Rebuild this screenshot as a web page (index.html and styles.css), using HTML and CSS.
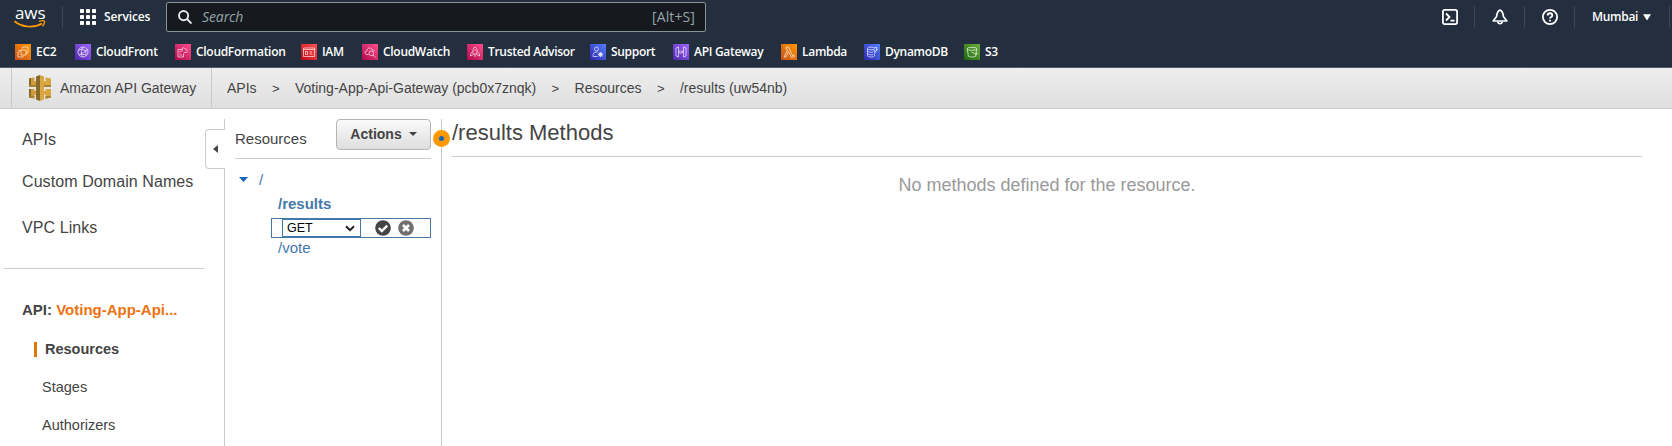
FILE: index.html
```html
<!DOCTYPE html>
<html lang="en">
<head>
<meta charset="utf-8">
<title>API Gateway</title>
<link rel="stylesheet" href="styles.css">
</head>
<body>
<svg width="0" height="0" class="defs">
  <defs>
    <linearGradient id="orange" x1="0" y1="1" x2="1" y2="0"><stop offset="0" stop-color="#c8511b"/><stop offset="1" stop-color="#f90"/></linearGradient>
    <linearGradient id="purple" x1="0" y1="1" x2="1" y2="0"><stop offset="0" stop-color="#4d27a8"/><stop offset="1" stop-color="#a166ff"/></linearGradient>
    <linearGradient id="pink" x1="0" y1="1" x2="1" y2="0"><stop offset="0" stop-color="#b0084d"/><stop offset="1" stop-color="#ff4f8b"/></linearGradient>
    <linearGradient id="red" x1="0" y1="1" x2="1" y2="0"><stop offset="0" stop-color="#bd0816"/><stop offset="1" stop-color="#ff5252"/></linearGradient>
    <linearGradient id="blue" x1="0" y1="1" x2="1" y2="0"><stop offset="0" stop-color="#2e27ad"/><stop offset="1" stop-color="#527fff"/></linearGradient>
    <linearGradient id="green" x1="0" y1="1" x2="1" y2="0"><stop offset="0" stop-color="#1b660f"/><stop offset="1" stop-color="#6cae3e"/></linearGradient>
  </defs>
</svg>

<header class="topnav">
  <div class="bar">
    <div class="logo"><span class="logo-text">aws</span>
      <svg class="swoosh" width="32" height="9" viewBox="0 0 32 9"><path d="M.5 1.200C8 7.500 20 8.300 28 3.500" fill="none" stroke="#f90" stroke-width="1.700"/><path d="M25 1.300C28 .6 30 .7 30.500 1.200S30 4.500 28.500 6.200" fill="none" stroke="#f90" stroke-width="1.300"/></svg>
    </div>
    <div class="services">
      <svg width="16" height="16" viewBox="0 0 16 16" fill="#fff"><rect width="4" height="4" rx=".8"/><rect x="6" width="4" height="4" rx=".8"/><rect x="12" width="4" height="4" rx=".8"/><rect y="6" width="4" height="4" rx=".8"/><rect x="6" y="6" width="4" height="4" rx=".8"/><rect x="12" y="6" width="4" height="4" rx=".8"/><rect y="12" width="4" height="4" rx=".8"/><rect x="6" y="12" width="4" height="4" rx=".8"/><rect x="12" y="12" width="4" height="4" rx=".8"/></svg>
      <span>Services</span>
    </div>
    <div class="search">
      <svg width="14" height="14" viewBox="0 0 14 14" fill="none" stroke="#e6e8e8" stroke-width="1.900"><circle cx="5.600" cy="5.600" r="4.600"/><path d="M9 9l4.500 4.500"/></svg>
      <span class="placeholder">Search</span>
      <span class="shortcut">[Alt+S]</span>
    </div>
    <div class="tools">
      <div class="tool"><svg width="16" height="16" viewBox="0 0 16 16" fill="none" stroke="#fff" stroke-width="1.800"><rect x=".9" y=".9" width="14.200" height="14.200" rx="1.800"/><path d="M4 4.500L7.500 8 4 11.500M8.500 11.600h4"/></svg></div>
      <div class="tool"><svg width="16" height="16" viewBox="0 0 16 16" fill="none" stroke="#fff" stroke-width="1.700" stroke-linejoin="round"><path d="M8 1.200C5.500 1.800 5 4 4.600 7.500L1.200 12h13.600L11.400 7.500C11 4 10.500 1.800 8 1.200z"/><path d="M5.800 12.500c.2 3 4.200 3 4.400 0"/></svg></div>
      <div class="tool"><svg width="16" height="16" viewBox="0 0 16 16" fill="none" stroke="#fff" stroke-width="1.800"><circle cx="8" cy="8" r="7.100"/><path d="M5.700 6.500c0-3 4.600-3 4.600 0C10.300 8 8 7.900 8 9.500M8 10.800v1.800"/></svg></div>
      <div class="region"><span>Mumbai</span><svg width="8" height="7" viewBox="0 0 8 7"><path d="M0 .3h8L4 6.500z" fill="#fff"/></svg></div>
    </div>
  </div>
  <nav class="favorites">
    <a class="fav w-ec2"><svg viewBox="0 0 16 16"><rect width="16" height="16" fill="url(#orange)"/><path d="M6 6h5v5H6zM4.500 8H3v5h5v-1.500M7.500 4.500V3H13v5.500h-1.500M3.500 6.500H6M11 9.500h1"/></svg><span>EC2</span></a>
    <a class="fav w-front"><svg viewBox="0 0 16 16"><rect width="16" height="16" fill="url(#purple)"/><circle cx="8" cy="8" r="5"/><path d="M3.500 6.500L7 5l4 2 1.500-2M7 5l-1 5 5 1V7L6 10l-2 1M6 10l2 3M7 5l1-2"/></svg><span>CloudFront</span></a>
    <a class="fav w-form"><svg viewBox="0 0 16 16"><rect width="16" height="16" fill="url(#pink)"/><path d="M7 5.500H3v7.500h5.500V9.500M4.500 7.500h2M4.500 9.200h1M4.500 11h2.500M7.500 7C6 4 9 2.500 10 5c2-.5 3 2.500 1.500 3.500H9"/></svg><span>CloudFormation</span></a>
    <a class="fav w-iam"><svg viewBox="0 0 16 16"><rect width="16" height="16" fill="url(#red)"/><path d="M2.500 4h11v8.500h-11zM2.500 5.500h11M4.500 7.500h2v3h-2zM8.500 8H11M8.500 10h3"/></svg><span>IAM</span></a>
    <a class="fav w-watch"><svg viewBox="0 0 16 16"><rect width="16" height="16" fill="url(#pink)"/><path d="M6.500 10.500H4.500C2 9.500 3 6.500 5 6.800c0-3.500 4.500-3.500 5-1 1.500-.3 2 .5 2.200 1.500"/><circle cx="9.300" cy="9.300" r="2.300"/><path d="M11 11l2.500 2.500"/></svg><span>CloudWatch</span></a>
    <a class="fav w-trust"><svg viewBox="0 0 16 16"><rect width="16" height="16" fill="url(#pink)"/><path d="M8 3C5.500 4.500 5.500 8 6.500 10h3C10.500 8 10.500 4.500 8 3zM5.800 7.500L3.500 10v2l3-1.500M10.200 7.500l2.300 2.500v2l-3-1.500M8 10v3M8 5.500v1.500"/></svg><span>Trusted Advisor</span></a>
    <a class="fav w-supp"><svg viewBox="0 0 16 16"><rect width="16" height="16" fill="url(#blue)"/><circle cx="6.500" cy="5" r="2"/><path d="M7.500 12.500H3c0-3 1-4.500 3.500-4.500h1"/><circle cx="10.500" cy="10.500" r="1.700"/><path d="M10.500 8v5M8 10.500h5M8.700 8.700l3.600 3.600M12.300 8.700l-3.600 3.600"/></svg><span>Support</span></a>
    <a class="fav w-api"><svg viewBox="0 0 16 16"><rect width="16" height="16" fill="url(#purple)"/><path d="M5.500 3L3 4v8l2.500 1zM10.500 3L13 4v8l-2.500 1zM7 6.500L6.500 8 7 9.500M8.800 6.500L7.800 9.800M9.300 7l.5 1-.5 1"/></svg><span>API Gateway</span></a>
    <a class="fav w-lamb"><svg viewBox="0 0 16 16"><rect width="16" height="16" fill="url(#orange)"/><path d="M5 3h2.500l4 8.500 1.500-.5.500 1.500-3 1L7.500 7.500 5 13H3l3.500-7L6 5H5z"/></svg><span>Lambda</span></a>
    <a class="fav w-dyn"><svg viewBox="0 0 16 16"><rect width="16" height="16" fill="url(#blue)"/><ellipse cx="7" cy="4.500" rx="3.500" ry="1.400"/><path d="M3.500 4.500v7.300c1 1.700 6 1.700 7 0V9.500M3.500 7c1 1.500 4 1.600 5.500 1M3.500 9.500c1 1.500 4 1.600 5.500 1M10.500 3.500h2.500l-1 2h1.500L10.500 9l.5-2.500H9.500"/></svg><span>DynamoDB</span></a>
    <a class="fav w-s3"><svg viewBox="0 0 16 16"><rect width="16" height="16" fill="url(#green)"/><ellipse cx="8" cy="4.800" rx="4.800" ry="1.500"/><path d="M3.200 4.800l1.200 7.500c1.500 1 5.700 1 7.200 0l1.200-7.500M7.500 8l5 2.500c1 0 1-.8-.2-1.800"/></svg><span>S3</span></a>
  </nav>
</header>

<div class="crumbs">
  <div class="product">
    <svg width="22" height="26" viewBox="0 0 22 26">
      <path d="M0 3.500L5.500 2.200v4h2V10h-2v2H0zM0 14h5.500v2h2v3.800h-2v4L0 22.500z" fill="#cf9b3a"/>
      <path d="M22 3.500L16.500 2.200v4h-2V10h2v2H22zM22 14h-5.500v2h-2v3.800h2v4l5.500-1.300z" fill="#d9a741"/>
      <path d="M0 3.500L2 3v9H0zM0 14h2v9L0 22.500zM11 0L7 1.500v23L11 26z" fill="#876929"/>
      <path d="M0 10h7v2H0zM0 20.500l5.500.5v1.500L2 23zM15 10h7v2h-7zM16.500 21H22v1.500L16.500 23.800z" fill="#a9812f"/>
      <path d="M11 0l4 1.500v23L11 26z" fill="#d9a741"/>
    </svg>
    <span>Amazon API Gateway</span>
  </div>
  <div class="trail">
    <span>APIs</span><i>&gt;</i><span>Voting-App-Api-Gateway (pcb0x7znqk)</span><i>&gt;</i><span>Resources</span><i>&gt;</i><span>/results (uw54nb)</span>
  </div>
</div>

<div class="layout">
  <aside class="sidebar">
    <a class="link l-apis">APIs</a>
    <a class="link l-domains">Custom Domain Names</a>
    <a class="link l-vpc">VPC Links</a>
    <hr>
    <div class="api-name">API: <b>Voting-App-Api...</b></div>
    <a class="sub current">Resources</a>
    <a class="sub">Stages</a>
    <a class="sub">Authorizers</a>
  </aside>
  <div class="edge">
    <div class="edge-line top"></div>
    <div class="collapse"><svg width="5" height="8" viewBox="0 0 5 8"><path d="M5 0v8L0 4z" fill="#444"/></svg></div>
    <div class="edge-line rest"></div>
  </div>
  <section class="resources">
    <div class="res-head">
      <span>Resources</span>
      <button class="actions">Actions<svg width="8" height="4" viewBox="0 0 8 4"><path d="M0 0h8L4 4z" fill="#444"/></svg></button>
    </div>
    <div class="tree">
      <div class="root"><svg width="9" height="5" viewBox="0 0 9 5"><path d="M0 0h9L4.500 5z" fill="#1166bb"/></svg><span>/</span></div>
      <div class="node selected">/results</div>
      <div class="method">
        <div class="select"><span>GET</span><svg width="10" height="7" viewBox="0 0 10 7"><path d="M1 1.200l4 4 4-4" fill="none" stroke="#222" stroke-width="2"/></svg></div>
        <svg class="ok" width="16" height="16" viewBox="0 0 16 16"><circle cx="8" cy="8" r="7.800" fill="#444"/><path d="M3.800 8l3 3 5.400-5.400" fill="none" stroke="#fff" stroke-width="2.400"/></svg>
        <svg width="16" height="16" viewBox="0 0 16 16"><circle cx="8" cy="8" r="7.800" fill="#6f6f6f"/><path d="M5 5l6 6M11 5l-6 6" stroke="#fff" stroke-width="2.600"/></svg>
      </div>
      <div class="node">/vote</div>
    </div>
  </section>
  <div class="divider"><span class="handle"></span></div>
  <main class="main">
    <h1>/results Methods</h1>
    <p>No methods defined for the resource.</p>
  </main>
</div>
</body>
</html>
```
FILE: styles.css
```css
* { box-sizing: border-box; }
body {
  margin: 0;
  height: 446px;
  overflow: hidden;
  background: #fff;
  color: #444;
  font-family: "Liberation Sans", Arial, sans-serif;
}
svg { display: block; flex: none; }
.defs { position: absolute; }

.topnav {
  height: 68px;
  background: #232f3e;
  border-bottom: 1px solid #545b64;
  color: #fff;
  font: 600 12px/16px "Open Sans", sans-serif;
  letter-spacing: -.1px;
}
.bar { display: flex; height: 34px; }
.logo {
  width: 63px;
  height: 22px;
  margin-top: 6px;
  padding-left: 14px;
  border-right: 1px solid #414750;
}
.logo-text {
  display: block;
  height: 14px;
  padding-left: 1px;
  font: 500 17px/13px "Open Sans", sans-serif;
  letter-spacing: -.1px;
}
.services {
  display: flex;
  align-items: center;
  gap: 8px;
  width: 103px;
  padding-left: 17px;
}
.search {
  display: flex;
  align-items: center;
  width: 540px;
  height: 30px;
  margin-top: 2px;
  padding: 0 10px 0 11px;
  background: #16191f;
  border: 1px solid #879596;
  border-radius: 2px;
  color: #95a5a6;
  font-size: 14px;
  font-weight: 400;
}
.placeholder { flex: 1; padding-left: 10px; font-style: italic; }
.shortcut { letter-spacing: .1px; }
.tools { display: flex; margin-left: auto; padding-top: 6px; }
.tool {
  display: flex;
  align-items: center;
  justify-content: center;
  width: 50px;
  height: 22px;
  border-right: 1px solid #414750;
}
.region {
  display: flex;
  align-items: center;
  justify-content: space-between;
  width: 95px;
  height: 22px;
  padding: 0 18px 0 17px;
  border-right: 1px solid #414750;
  margin-right: 2px;
  letter-spacing: -.3px;
}
.favorites { display: flex; gap: 18px; padding: 10px 0 0 15px; }
.fav { display: flex; gap: 5px; white-space: nowrap; letter-spacing: -.3px; }
.fav svg { width: 16px; height: 16px; fill: none; stroke: #fff; stroke-width: .75; stroke-opacity: .85; }
.fav rect { stroke: none; }
.w-ec2 { width: 42px; }
.w-front { width: 82px; }
.w-form { width: 108px; }
.w-iam { width: 43px; }
.w-watch { width: 87px; }
.w-trust { width: 105px; }
.w-supp { width: 65px; }
.w-api { width: 90px; }
.w-lamb { width: 65px; }
.w-dyn { width: 82px; }

.crumbs {
  display: flex;
  height: 41px;
  padding-left: 11px;
  background: linear-gradient(#eee, #dfdfdf);
  border-bottom: 1px solid #ccc;
  font-size: 14px;
}
.product {
  display: flex;
  align-items: center;
  gap: 9px;
  width: 201px;
  padding-left: 17px;
  border: solid #c8c8c8;
  border-width: 0 1px;
  white-space: nowrap;
}
.trail { display: flex; align-items: center; padding-left: 15px; white-space: nowrap; }
.trail i { width: 38.400px; text-align: center; font-style: normal; font-size: 13px; }

.layout { display: flex; height: 337px; }
.sidebar { display: flex; flex-direction: column; width: 205px; padding: 21px 1px 0 4px; }
.link { padding-left: 18px; font-size: 16px; line-height: 20px; letter-spacing: .08px; }
.l-domains { margin-top: 22px; }
.l-vpc { margin-top: 26px; }
.sidebar hr { flex: none; width: 100%; height: 1px; margin: 30px 0 31px; border: 0; background: #ccc; }
.api-name { padding-left: 18px; font-size: 15px; font-weight: 700; line-height: 20px; white-space: nowrap; }
.api-name b { color: #ec7211; }
.sub { margin-top: 18px; padding-left: 38px; font-size: 14.500px; line-height: 20px; }
.sub.current {
  align-self: flex-start;
  height: 15px;
  margin: 22px 0 2px 30px;
  padding-left: 8px;
  border-left: 3px solid #e07700;
  font-weight: 700;
  line-height: 15px;
}
.edge { display: flex; flex-direction: column; width: 20px; padding-top: 10px; }
.edge-line { border-right: 1px solid #ccc; }
.edge-line.top { height: 10px; }
.edge-line.rest { flex: 1; }
.collapse {
  display: flex;
  align-items: center;
  height: 40px;
  padding-left: 7px;
  border: 1px solid #ccc;
  border-right: 0;
  border-radius: 4px 0 0 4px;
}

.resources { width: 216px; padding: 10px 10px 0; font-size: 15px; }
.res-head {
  display: flex;
  align-items: center;
  justify-content: space-between;
  height: 40px;
  padding-bottom: 1px;
  border-bottom: 1px solid #ccc;
}
.res-head > span { padding-top: 1px; }
.actions {
  display: flex;
  align-items: center;
  justify-content: center;
  gap: 7px;
  align-self: flex-start;
  width: 95px;
  height: 31px;
  padding: 0 6px 1px;
  border: 1px solid #b4b4b4;
  border-radius: 4px;
  background: linear-gradient(#fafafa, #dedede);
  color: #444;
  font: 700 14px "Liberation Sans", Arial, sans-serif;
}
.tree { color: #4477aa; }
.root { display: flex; align-items: center; gap: 11px; height: 21px; margin-top: 10px; padding-left: 4px; }
.node { padding-left: 43px; line-height: 20px; height: 20px; }
.node.selected { margin: 4px 0; font-weight: 700; }
.method {
  display: flex;
  align-items: center;
  height: 20px;
  margin-left: 36px;
  padding-left: 10px;
  border: 1px solid #4477aa;
}
.select {
  display: flex;
  align-items: center;
  justify-content: space-between;
  width: 79px;
  height: 18px;
  padding: 0 5px 1px 4px;
  border: 1px solid #4477aa;
  color: #000;
  font-size: 12.500px;
}
.select svg { margin-top: 1px; }
.ok { margin: 0 7px 0 14px; }

.divider { position: relative; width: 1px; margin-top: 10px; background: #ccc; }
.handle {
  position: absolute;
  top: 11px;
  left: -8px;
  width: 17px;
  height: 17px;
  border: 6px solid #f90;
  border-radius: 50%;
  background: #1166bb;
}
.main { flex: 1; padding: 10px 30px 0 10px; }
.main h1 {
  height: 38px;
  margin: 0;
  border-bottom: 1px solid #ccc;
  font-size: 22px;
  font-weight: 400;
  line-height: 27px;
}
.main p { margin: 18px 0 0; color: #999; font-size: 18px; line-height: 20px; text-align: center; }
```
